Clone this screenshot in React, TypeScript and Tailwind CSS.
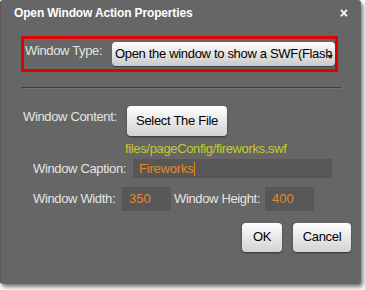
import React from 'react';

const font = { fontFamily: '"Liberation Sans", Arial, sans-serif' };

const label = 'shrink-0 whitespace-nowrap text-[13px] tracking-[-0.35px] text-[#e4e4e4]';
const grayButton =
  'rounded-[4px] bg-gradient-to-b from-white to-[#d2d2d2] shadow-[0_1px_2px_rgba(0,0,0,0.5)] text-[13px] tracking-[-0.3px] text-black';
const field = 'shrink-0 bg-[#575757] flex items-center text-[13px] text-[#e08a2c]';

export default function App() {
  return (
    <div className="w-[365px] h-[290px] bg-white" style={font}>
      <div className="w-[361px] h-[284px] bg-[#666666] rounded-[3px] border-l border-[#5a5a5a] shadow-[2px_3px_4px_rgba(0,0,0,0.55)] flex flex-col">
        {/* Title bar */}
        <div className="h-[26px] flex items-center justify-between pl-[13px] pr-[13px]">
          <span className="text-[12px] font-bold tracking-[-0.15px] text-white">Open Window Action Properties</span>
          <span className="text-[14px] font-bold text-white leading-none">×</span>
        </div>

        {/* Window type, highlighted */}
        <div className="mt-[10px] ml-[20px] w-[317px] h-[36px] border-[3px] border-[#e20000] flex items-center">
          <span className={`${label} ml-[1px] w-[87px] -mt-[6px]`}>Window Type:</span>
          <div className="relative shrink-0 w-[223px] h-[24px] rounded-[4px] bg-gradient-to-b from-white to-[#c9c9c9] shadow-[0_1px_1px_rgba(0,0,0,0.4)] overflow-hidden flex items-center">
            <span className="pl-[3px] text-[13px] tracking-[-0.32px] text-black whitespace-nowrap">
              Open the window to show a SWF(Flash
            </span>
            <svg className="absolute right-[2px] top-[13px]" width="6" height="4" viewBox="0 0 6 4">
              <path d="M0 0h6L3 4z" fill="#222" />
            </svg>
          </div>
        </div>

        {/* Separator */}
        <div className="mt-[15px] ml-[20px] w-[320px] h-[1px] bg-[#3e3e3e]" />
        <div className="ml-[20px] w-[320px] h-[1px] bg-[#727272]" />

        {/* Window content */}
        <div className="mt-[17px] ml-[22px] flex">
          <span className={`${label} w-[104px] mt-[1px]`}>Window Content:</span>
          <button className={`${grayButton} w-[100px] h-[30px]`}>Select The File</button>
        </div>
        <div className="ml-[124px] mt-[6px] text-[13px] tracking-[-0.35px] leading-[14px] text-[#c2cc2c]">
          files/pageConfig/fireworks.swf
        </div>

        {/* Caption */}
        <div className="mt-[3px] ml-[32px] flex items-center">
          <span className={`${label} w-[100px]`}>Window Caption:</span>
          <div className={`${field} w-[199px] h-[19px] pl-[6px]`}>
            <span className="tracking-[-0.2px]">Fireworks</span>
            <span className="w-[1px] h-[14px] bg-[#e08a2c]" />
          </div>
        </div>

        {/* Size */}
        <div className="mt-[8px] ml-[32px] flex items-center">
          <span className={`${label} w-[89px]`}>Window Width:</span>
          <div className={`${field} w-[49px] h-[24px] pl-[7px]`}>350</div>
          <span className={`${label} ml-[3px] w-[91px]`}>Window Height:</span>
          <div className={`${field} w-[49px] h-[24px] pl-[7px]`}>400</div>
        </div>

        {/* Buttons */}
        <div className="mt-[12px] ml-[241px] flex gap-[11px]">
          <button className={`${grayButton} w-[40px] h-[29px]`}>OK</button>
          <button className={`${grayButton} w-[58px] h-[29px]`}>Cancel</button>
        </div>
      </div>
    </div>
  );
}
